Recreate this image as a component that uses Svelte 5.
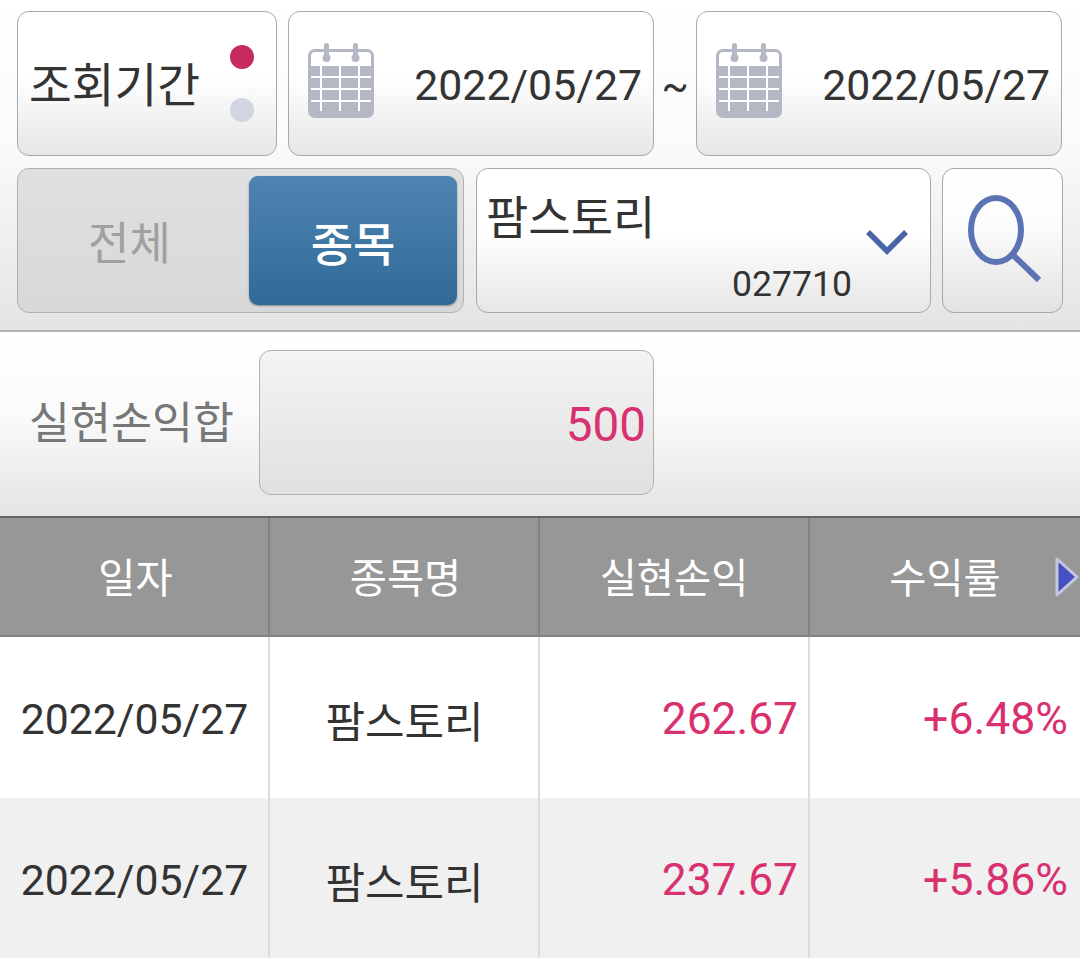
<script lang="ts">
	const rows = [
		{ date: '2022/05/27', name: '팜스토리', profit: '262.67', rate: '+6.48%' },
		{ date: '2022/05/27', name: '팜스토리', profit: '237.67', rate: '+5.86%' }
	];
	const grid_y = [18, 30, 42];
	const grid_x = [11, 30, 49];
</script>

{#snippet calendar()}
	<svg class="cal" width="66" height="76" viewBox="0 0 66 76">
		<rect x="0" y="7" width="66" height="69" rx="7" fill="#b4b8c4" />
		<path d="M3 24V14q0-4 4-4h52q4 0 4 4v10z" fill="#fff" />
		<rect x="16" y="1" width="5" height="16" rx="2.5" fill="#b4b8c4" />
		<rect x="45" y="1" width="5" height="16" rx="2.5" fill="#b4b8c4" />
		<circle cx="18.5" cy="16" r="4" fill="#b4b8c4" />
		<circle cx="47.5" cy="16" r="4" fill="#b4b8c4" />
		<g stroke="#fff" stroke-width="2">
			{#each grid_y as y}
				<line x1="3" x2="63" y1={y + 17} y2={y + 17} />
			{/each}
			{#each grid_x as x}
				<line x1={x + 2} x2={x + 2} y1="24" y2="69" />
			{/each}
		</g>
	</svg>
{/snippet}

<div class="page">
	<section class="filters">
		<div class="row">
			<div class="box period">
				<span class="label">조회기간</span>
				<span class="dots"><i class="on"></i><i></i></span>
			</div>
			<div class="box date">
				{@render calendar()}
				<span class="date-text">2022/05/27</span>
			</div>
			<span class="tilde">~</span>
			<div class="box date">
				{@render calendar()}
				<span class="date-text">2022/05/27</span>
			</div>
		</div>
		<div class="row">
			<div class="toggle">
				<span class="opt">전체</span>
				<span class="opt active">종목</span>
			</div>
			<div class="box stock">
				<span class="stock-name">팜스토리</span>
				<svg class="chevron" width="44" height="28" viewBox="0 0 44 28">
					<path d="M3 4 L22 23 L41 4" fill="none" stroke="#4a64a8" stroke-width="5.5" />
				</svg>
				<span class="stock-code">027710</span>
			</div>
			<div class="box search">
				<svg width="76" height="90" viewBox="0 0 76 90">
					<ellipse cx="29" cy="35" rx="25" ry="32" fill="none" stroke="#5b72b4" stroke-width="6" />
					<line x1="46" y1="60" x2="72" y2="85" stroke="#5b72b4" stroke-width="6" />
				</svg>
			</div>
		</div>
	</section>

	<section class="summary">
		<span class="summary-label">실현손익합</span>
		<div class="summary-value">500</div>
	</section>

	<section class="table">
		<div class="thead">
			<div class="col-a">일자</div>
			<div class="col-a">종목명</div>
			<div>실현손익</div>
			<div class="last">
				수익률
				<svg class="next" width="26" height="42" viewBox="0 0 26 42">
					<path d="M3 3 L23 21 L3 39 Z" fill="#4650c0" stroke="#c4c8dc" stroke-width="3" stroke-linejoin="round" />
				</svg>
			</div>
		</div>
		{#each rows as row, i}
			<div class="tr" class:alt={i % 2 === 1}>
				<div class="date-cell">{row.date}</div>
				<div class="name-cell">{row.name}</div>
				<div class="num profit">{row.profit}</div>
				<div class="num">{row.rate}</div>
			</div>
		{/each}
	</section>
</div>

<style>
	:global(body) {
		background: #fff;
	}

	.page {
		height: 958px;
		overflow: hidden;
		font-family: Roboto, 'Noto Sans CJK KR', sans-serif;
		color: #333;
	}

	.filters {
		height: 332px;
		box-sizing: border-box;
		padding: 11px 16px 0 17px;
		display: flex;
		flex-direction: column;
		gap: 12px;
		background: linear-gradient(#fff, #fafafa 45%, #e4e4e4);
		border-bottom: 2px solid #b4b4b4;
	}

	.row {
		display: flex;
		height: 145px;
	}

	.box {
		box-sizing: border-box;
		height: 145px;
		border: 1px solid #a8a8a8;
		border-radius: 12px;
		background: linear-gradient(#fff, #fff 45%, #e6e6e6);
	}

	.period {
		width: 260px;
		margin-right: 11px;
		display: flex;
		align-items: center;
		justify-content: space-between;
		padding: 0 22px 0 11px;
	}

	.label {
		font-size: 46.5px;
		position: relative;
		top: -2px;
	}

	.dots {
		display: flex;
		flex-direction: column;
		gap: 29px;
	}

	.dots i {
		display: block;
		width: 24px;
		height: 24px;
		border-radius: 50%;
		background: #d2d6e2;
	}

	.dots i.on {
		background: #c72a60;
	}

	.date {
		width: 366px;
		display: flex;
		align-items: center;
		justify-content: space-between;
		padding: 0 11px 0 19px;
		font-size: 42.8px;
		color: #333;
	}

	.date-text {
		position: relative;
		top: 1px;
	}

	.cal {
		margin-top: -7px;
	}

	.tilde {
		width: 42px;
		text-align: center;
		font-size: 40px;
		line-height: 152px;
	}

	.toggle {
		box-sizing: border-box;
		width: 447px;
		height: 145px;
		margin-right: 12px;
		padding: 7px 6px 7px 0;
		display: flex;
		border: 1px solid #b0b0b0;
		border-radius: 12px;
		background: linear-gradient(#e0e0e0, #d8d8d8);
	}

	.opt {
		flex: 1;
		display: flex;
		align-items: center;
		justify-content: center;
		padding-right: 8px;
		font-size: 45px;
		color: #a0a0a0;
	}

	.opt.active {
		flex: none;
		box-sizing: border-box;
		width: 208px;
		padding: 0;
		font-size: 46px;
		font-weight: 500;
		color: #fff;
		border-radius: 9px;
		background: linear-gradient(#4f83b3, #2f6b96);
		box-shadow: 0 1px 2px #888;
	}

	.stock {
		position: relative;
		width: 455px;
		margin-right: 11px;
	}

	.stock-name {
		position: absolute;
		left: 9px;
		top: 18px;
		font-size: 46px;
		line-height: 62px;
	}

	.chevron {
		position: absolute;
		left: 388px;
		top: 59px;
	}

	.stock-code {
		position: absolute;
		left: 255px;
		top: 93px;
		font-size: 35.6px;
		line-height: 44px;
	}

	.search {
		width: 121px;
		display: flex;
		align-items: center;
		justify-content: center;
		background: linear-gradient(#fff, #fcfcfc 40%, #e2e2e2);
	}

	.search svg {
		margin: 0 0 2px 4px;
	}

	.summary {
		height: 184px;
		box-sizing: border-box;
		padding: 18px 0 0 29px;
		display: flex;
		background: linear-gradient(#fff, #fafafa 45%, #e4e4e4);
	}

	.summary-label {
		width: 230px;
		line-height: 148px;
		font-size: 44.6px;
		color: #777;
	}

	.summary-value {
		box-sizing: border-box;
		width: 395px;
		height: 145px;
		padding-right: 7px;
		line-height: 148px;
		text-align: right;
		font-size: 47.6px;
		color: #d9306f;
		border: 1px solid #b0b0b0;
		border-radius: 12px;
		background: linear-gradient(#f4f4f4, #e0e0e0);
	}

	.thead,
	.tr {
		display: grid;
		grid-template-columns: 270px 270px 270px 270px;
	}

	.thead {
		height: 121px;
		box-sizing: border-box;
		background: #979797;
		color: #fff;
		font-size: 40.4px;
		border-top: 2px solid #666;
		border-bottom: 2px solid #828282;
	}

	.thead > div {
		display: flex;
		align-items: center;
		justify-content: center;
		padding-bottom: 2px;
		border-right: 2px solid #828282;
	}

	.thead > .col-a {
		padding-left: 3px;
	}

	.thead > .last {
		position: relative;
		border-right: 0;
	}

	.next {
		position: absolute;
		right: 0;
		top: 38px;
	}

	.tr {
		height: 161px;
		font-size: 44.6px;
		background: #fff;
	}

	.tr.alt {
		background: #f0f0f0;
	}

	.tr > div {
		display: flex;
		align-items: center;
		padding-top: 3px;
		border-right: 2px solid #dcdcdc;
		box-sizing: border-box;
	}

	.tr > div:last-child {
		border-right: 0;
	}

	.date-cell {
		justify-content: center;
		padding-left: 1px;
		font-size: 42.8px;
		color: #333;
	}

	.name-cell {
		justify-content: center;
		padding-left: 1px;
		font-size: 43px;
	}

	.num {
		justify-content: flex-end;
		padding-right: 12px;
		color: #d9306f;
	}

	.num.profit {
		padding-right: 10px;
		font-size: 44.3px;
	}
</style>
